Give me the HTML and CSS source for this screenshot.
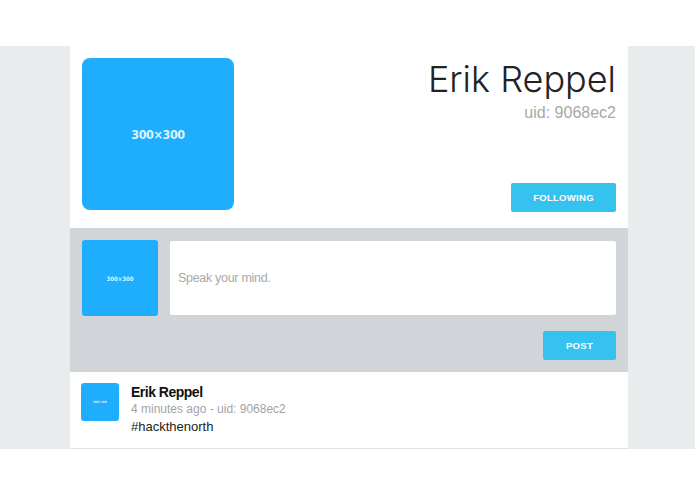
FILE: index.html
```html
<!DOCTYPE html>
<html>
<head>
<meta charset="utf-8">
<link rel="stylesheet" href="styles.css">
</head>
<body>
<div class="band">
  <div class="container">
    <section class="profile">
      <div class="avatar avatar-lg"><span>300×300</span></div>
      <div class="profile-info">
        <h1 class="profile-name">Erik Reppel</h1>
        <div class="profile-uid">uid: 9068ec2</div>
        <button class="btn btn-follow">FOLLOWING</button>
      </div>
    </section>
    <section class="composer">
      <div class="composer-row">
        <div class="avatar avatar-md"><span>300×300</span></div>
        <div class="composer-input">Speak your mind.</div>
      </div>
      <div class="composer-actions">
        <button class="btn btn-post">POST</button>
      </div>
    </section>
    <section class="post">
      <div class="avatar avatar-sm"><span>300×300</span></div>
      <div class="post-body">
        <div class="post-name">Erik Reppel</div>
        <div class="post-meta">4 minutes ago - uid: 9068ec2</div>
        <div class="post-text">#hackthenorth</div>
      </div>
    </section>
  </div>
</div>
</body>
</html>
```
FILE: styles.css
```css
html, body {
  margin: 0;
  padding: 0;
  background: #ffffff;
  font-family: "Liberation Sans", Arial, sans-serif;
}
.band {
  margin-top: 46px;
  background: #e9eced;
}
.container {
  width: 558px;
  margin-left: 70px;
  background: #ffffff;
}
.avatar {
  background: #1faefd;
  display: flex;
  align-items: center;
  justify-content: center;
  color: #dff3ff;
  font-family: "DejaVu Sans", sans-serif;
  font-stretch: condensed;
  font-weight: bold;
  flex: none;
}
.avatar-lg {
  width: 152px;
  height: 152px;
  border-radius: 8px;
  font-size: 12.5px;
  letter-spacing: -0.4px;
}
.avatar-md {
  width: 76px;
  height: 76px;
  border-radius: 3px;
  font-size: 6px;
}
.avatar-sm {
  width: 38px;
  height: 38px;
  border-radius: 3px;
  font-size: 3px;
}
.profile {
  display: flex;
  justify-content: space-between;
  padding: 12px 12px 18px;
}
.profile-info {
  display: flex;
  flex-direction: column;
  align-items: flex-end;
}
.profile-name {
  margin: 3px 0 0;
  font-family: Inter, Roboto, sans-serif;
  font-weight: 300;
  font-size: 36px;
  line-height: 36px;
  color: #222222;
  letter-spacing: 0;
}
.profile-uid {
  margin-top: 7px;
  font-size: 16px;
  line-height: 18px;
  color: #a8a8a8;
}
.btn {
  border: none;
  background: #35c2ef;
  color: #ffffff;
  font-family: "Liberation Sans", Arial, sans-serif;
  font-weight: bold;
  font-size: 9.5px;
  letter-spacing: 0.3px;
  border-radius: 2px;
  padding: 0;
}
.btn-follow {
  margin-top: auto;
  margin-bottom: -2px;
  width: 105px;
  height: 29px;
}
.composer {
  background: #d1d5d9;
  padding: 12px;
}
.composer-row {
  display: flex;
  gap: 12px;
}
.composer-input {
  flex: 1;
  height: 74px;
  margin-top: 1px;
  background: #ffffff;
  border-radius: 2px;
  box-sizing: border-box;
  padding-left: 8px;
  display: flex;
  align-items: center;
  font-size: 12.5px;
  letter-spacing: -0.3px;
  color: #a8a8a8;
}
.composer-actions {
  display: flex;
  justify-content: flex-end;
  margin-top: 15px;
}
.btn-post {
  width: 73px;
  height: 29px;
}
.post {
  display: flex;
  gap: 12px;
  box-sizing: border-box;
  height: 77px;
  padding: 11px 11px 0;
  border-bottom: 1px solid #dfe2e4;
}
.post-body {
  padding-top: 1px;
}
.post-name {
  font-weight: bold;
  font-size: 14px;
  line-height: 16px;
  color: #111111;
  letter-spacing: -0.5px;
}
.post-meta {
  margin-top: 1px;
  font-size: 12px;
  line-height: 17px;
  color: #a3a3a3;
}
.post-text {
  font-size: 13px;
  line-height: 17px;
  color: #222222;
}
```
